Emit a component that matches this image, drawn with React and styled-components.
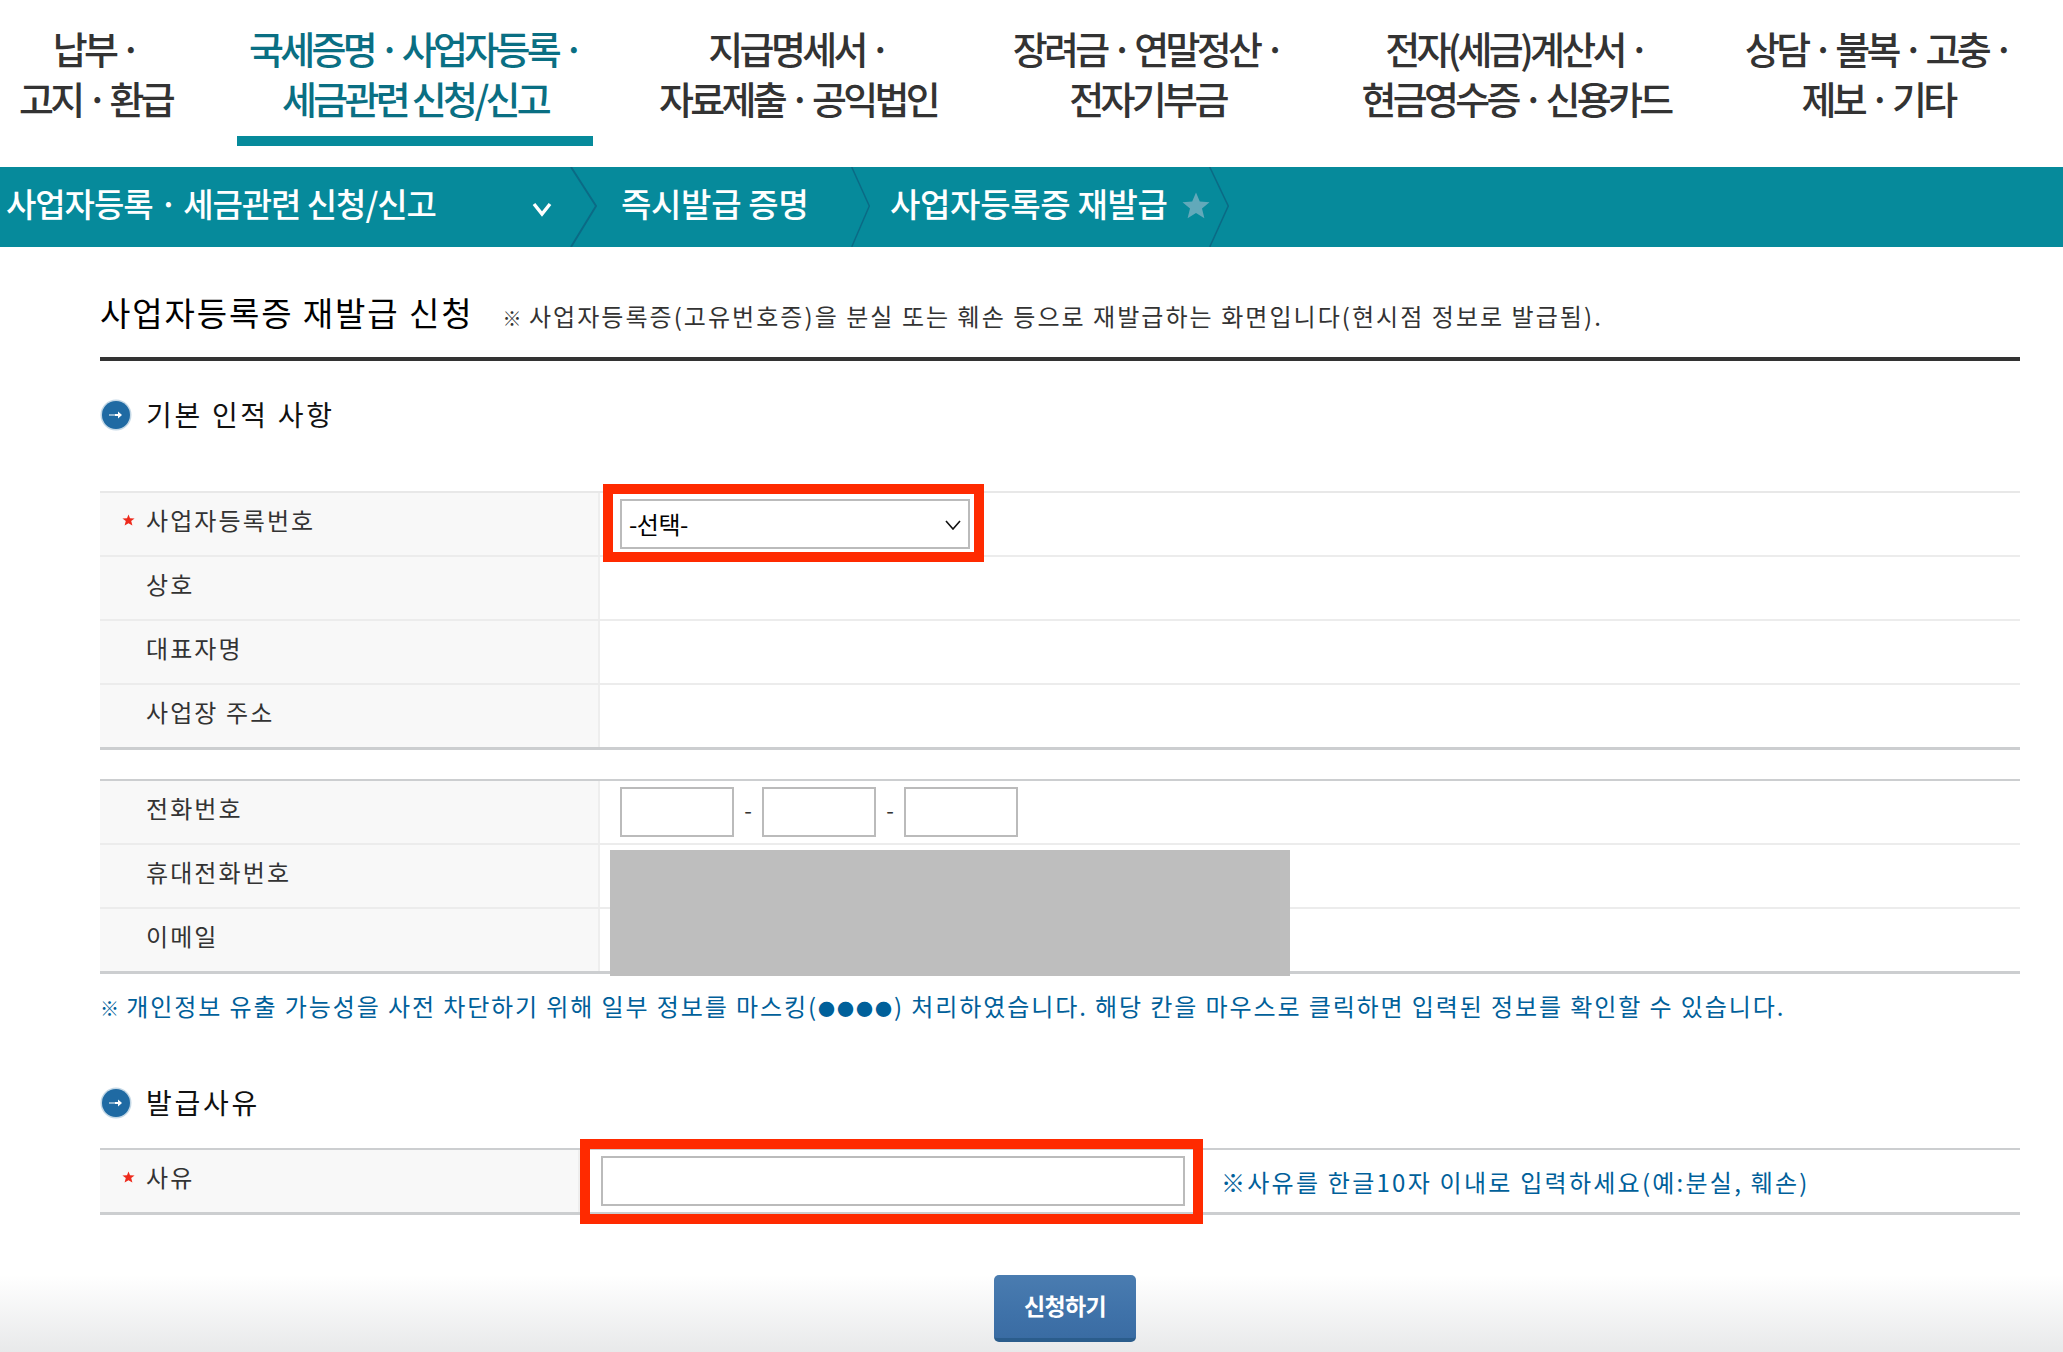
import React from "react";
import styled, { createGlobalStyle } from "styled-components";

const GlobalStyle = createGlobalStyle`
  html, body {
    margin: 0;
    padding: 0;
    background: #fff;
  }
  * {
    box-sizing: border-box;
  }
`;

const FONT = `"Noto Sans CJK KR", "Noto Sans", sans-serif`;

const NAV_ITEMS = [
  { width: 191, lines: ["납부 ·", "고지 · 환급"] },
  { width: 356, lines: ["국세증명 · 사업자등록 ·", "세금관련 신청/신고"], active: true },
  { width: 318, lines: ["지급명세서 ·", "자료제출 · 공익법인"] },
  { width: 289, lines: ["장려금 · 연말정산 ·", "전자기부금"] },
  { width: 356, lines: ["전자(세금)계산서 ·", "현금영수증 · 신용카드"] },
  { width: 276, lines: ["상담 · 불복 · 고충 ·", "제보 · 기타"] },
];

const CrumbSeparator = ({ width }) => (
  <SeparatorSvg $width={width} viewBox="0 0 28 80" preserveAspectRatio="none">
    <path d="M1 0 L27 39 L1 80" fill="none" stroke="#0b6a85" strokeWidth="2" />
  </SeparatorSvg>
);

const SectionIcon = () => (
  <svg width="32" height="32" viewBox="0 0 32 32">
    <circle cx="16" cy="16" r="15.5" fill="#c4d8e6" />
    <circle cx="16" cy="16" r="14" fill="#1f6aa3" />
    <path d="M9 16 H16" stroke="#8fb4cf" strokeWidth="2" />
    <path d="M15 16 H21" stroke="#fff" strokeWidth="2" />
    <path d="M18 12.5 L22 16 L18 19.5 Z" fill="#fff" />
  </svg>
);

const RequiredStar = () => (
  <svg width="13" height="12" viewBox="0 0 13 12">
    <path d="M6.5 0.5 L8 4.2 L12.6 4.5 L9.2 7 L10.4 11.5 L6.5 9.2 L2.6 11.5 L3.8 7 L0.4 4.5 L5 4.2 Z" fill="#ee2a1c" />
  </svg>
);

const Field = ({ label, required, children }) => (
  <Row>
    <Label>
      <MarkSlot>{required && <RequiredStar />}</MarkSlot>
      {label}
    </Label>
    <Value>{children}</Value>
  </Row>
);

export default function App() {
  return (
    <Page>
      <GlobalStyle />
      <Nav>
        {NAV_ITEMS.map((item) => (
          <NavItem key={item.lines[0]} $width={item.width} $active={item.active}>
            {item.lines[0]}
            <br />
            {item.lines[1]}
          </NavItem>
        ))}
      </Nav>

      <CrumbBar>
        <Crumb $width={597} $pad={6} $spacing={-1.05}>
          사업자등록 · 세금관련 신청/신고
          <CrumbArrow width="22" height="16" viewBox="0 0 22 16">
            <path d="M3 3 L11 13 L19 3" fill="none" stroke="#fff" strokeWidth="3.4" />
          </CrumbArrow>
          <CrumbSeparator width={27} />
        </Crumb>
        <Crumb $width={273} $pad={24}>
          즉시발급 증명
          <CrumbSeparator width={19} />
        </Crumb>
        <Crumb $width={359} $pad={20}>
          사업자등록증 재발급
          <StarIcon width="28" height="27" viewBox="0 0 28 27">
            <path d="M14 0.5 L17.8 9.6 L27.5 10.3 L20 16.6 L22.4 26.2 L14 21 L5.6 26.2 L8 16.6 L0.5 10.3 L10.2 9.6 Z" fill="#62a9ba" />
          </StarIcon>
          <CrumbSeparator width={20} />
        </Crumb>
      </CrumbBar>

      <Content>
        <TitleRow>
          <Title>사업자등록증 재발급 신청</Title>
          <TitleNote><RefMark>※</RefMark> 사업자등록증(고유번호증)을 분실 또는 훼손 등으로 재발급하는 화면입니다(현시점 정보로 발급됨).</TitleNote>
        </TitleRow>

        <SectionHeading $height={130} $pad={33}>
          <SectionIcon />
          기본 인적 사항
        </SectionHeading>

        <Table>
          <Field label="사업자등록번호" required>
            <SelectWrap>
              <Select defaultValue="">
                <option value="">-선택-</option>
              </Select>
              <SelectArrow width="16" height="10" viewBox="0 0 16 10">
                <path d="M1 1 L8 9 L15 1" fill="none" stroke="#111" strokeWidth="1.6" />
              </SelectArrow>
            </SelectWrap>
            <Highlight $left={3} $top={-9} $width={381} $height={78} />
          </Field>
          <Field label="상호" />
          <Field label="대표자명" />
          <Field label="사업장 주소" />
        </Table>

        <Table $strong $gap={29}>
          <MaskBlock />
          <Field label="전화번호">
            <PhoneInput />
            <Dash>-</Dash>
            <PhoneInput />
            <Dash>-</Dash>
            <PhoneInput />
          </Field>
          <Field label="휴대전화번호" />
          <Field label="이메일" />
        </Table>

        <Note>
          <RefMark>※</RefMark> 개인정보 유출 가능성을 사전 차단하기 위해 일부 정보를 마스킹(<MaskDots>●●●●</MaskDots>) 처리하였습니다. 해당 칸을 마우스로 클릭하면 입력된 정보를 확인할 수 있습니다.
        </Note>

        <SectionHeading $height={109} $pad={43}>
          <SectionIcon />
          발급사유
        </SectionHeading>

        <Table $strong $labelWidth={480}>
          <Field label="사유" required>
            <ReasonInput />
            <Hint>※사유를 한글10자 이내로 입력하세요(예:분실, 훼손)</Hint>
            <Highlight $left={0} $top={-11} $width={623} $height={85} />
          </Field>
        </Table>

        <ButtonRow>
          <SubmitButton type="button">신청하기</SubmitButton>
        </ButtonRow>
      </Content>
    </Page>
  );
}

const Page = styled.div`
  height: 1352px;
  overflow: hidden;
  font-family: ${FONT};
  background: linear-gradient(to bottom, #fff 1275px, #e8e9ea 1352px);
`;

const Nav = styled.nav`
  display: flex;
  gap: 46px;
  height: 167px;
`;

const NavItem = styled.a`
  display: block;
  flex: none;
  width: ${(p) => p.$width}px;
  height: 146px;
  padding-top: 23px;
  text-align: center;
  font-size: 38px;
  font-weight: 500;
  line-height: 50px;
  letter-spacing: -3.7px;
  white-space: nowrap;
  color: ${(p) => (p.$active ? "#0a6f83" : "#333")};
  border-bottom: 10px solid ${(p) => (p.$active ? "#068a9b" : "transparent")};
`;

const CrumbBar = styled.div`
  display: flex;
  height: 80px;
  background: #068a9b;
`;

const Crumb = styled.div`
  position: relative;
  display: flex;
  align-items: center;
  flex: none;
  width: ${(p) => p.$width}px;
  padding-left: ${(p) => p.$pad}px;
  padding-bottom: 8px;
  font-size: 33px;
  font-weight: 500;
  letter-spacing: ${(p) => p.$spacing ?? -0.3}px;
  white-space: nowrap;
  color: #fff;
`;

const SeparatorSvg = styled.svg`
  position: absolute;
  top: 0;
  right: 0;
  width: ${(p) => p.$width}px;
  height: 80px;
`;

const CrumbArrow = styled.svg`
  position: absolute;
  left: 531px;
  top: 34px;
`;

const StarIcon = styled.svg`
  margin: 4px 0 0 14px;
`;

const Content = styled.main`
  padding: 0 43px 0 100px;
`;

const TitleRow = styled.div`
  display: flex;
  align-items: baseline;
  gap: 29px;
  height: 114px;
  padding-top: 41px;
  border-bottom: 4px solid #333;
`;

const Title = styled.h1`
  margin: 0;
  font-size: 33px;
  font-weight: 400;
  letter-spacing: 1.9px;
  white-space: nowrap;
  color: #000;
`;

const TitleNote = styled.span`
  font-size: 24px;
  letter-spacing: 2.05px;
  color: #333;
  white-space: nowrap;
`;

const RefMark = styled.span`
  font-size: 19px;
  letter-spacing: 0;
`;

const SectionHeading = styled.h2`
  display: flex;
  align-items: flex-start;
  gap: 14px;
  height: ${(p) => p.$height}px;
  margin: 0;
  padding-top: ${(p) => p.$pad}px;
  font-size: 28px;
  font-weight: 400;
  line-height: 40px;
  letter-spacing: 2.7px;
  color: #111;

  svg {
    margin-top: 5px;
  }
`;

const Table = styled.section`
  --label-width: ${(p) => p.$labelWidth || 500}px;
  position: relative;
  margin-top: ${(p) => p.$gap || 0}px;
  border-top: 2px solid ${(p) => (p.$strong ? "#ccced0" : "#e8e8e8")};
  border-bottom: 3px solid #ccced0;
`;

const Row = styled.div`
  display: grid;
  grid-template-columns: var(--label-width) 1fr;
  height: 64px;
  border-bottom: 2px solid #ececec;

  &:last-child {
    height: 62px;
    border-bottom: none;
  }
`;

const Label = styled.div`
  display: flex;
  align-items: center;
  padding-bottom: 9px;
  background: #f8f8f8;
  border-right: 2px solid #eee;
  font-size: 24px;
  letter-spacing: 2.1px;
  color: #333;
`;

const MarkSlot = styled.span`
  display: flex;
  align-items: center;
  flex: none;
  width: 46px;
  padding-left: 22px;
`;

const Value = styled.div`
  position: relative;
  display: flex;
  align-items: center;
  padding-left: 20px;
`;

const SelectWrap = styled.div`
  position: relative;
  width: 350px;
  height: 50px;
`;

const Select = styled.select`
  width: 100%;
  height: 100%;
  padding: 0 0 2px 7px;
  appearance: none;
  border: 2px solid #bbb;
  border-radius: 0;
  background: #fff;
  font-family: ${FONT};
  font-size: 24px;
  letter-spacing: -0.5px;
  color: #000;
`;

const SelectArrow = styled.svg`
  position: absolute;
  right: 9px;
  top: 21px;
`;

const Highlight = styled.div`
  position: absolute;
  left: ${(p) => p.$left}px;
  top: ${(p) => p.$top}px;
  width: ${(p) => p.$width}px;
  height: ${(p) => p.$height}px;
  border: 10px solid #ff2a00;
  pointer-events: none;
`;

const PhoneInput = styled.input`
  width: 114px;
  height: 50px;
  padding: 0;
  border: 2px solid #bbb;
  background: #fff;
`;

const Dash = styled.span`
  width: 28px;
  padding-bottom: 6px;
  text-align: center;
  font-size: 22px;
  color: #333;
`;

const MaskBlock = styled.div`
  position: absolute;
  z-index: 1;
  left: 510px;
  top: 69px;
  width: 680px;
  height: 126px;
  background: #bebebe;
`;

const Note = styled.p`
  margin: 0;
  padding-top: 15px;
  height: 65px;
  font-size: 24px;
  line-height: 34px;
  letter-spacing: 1.9px;
  white-space: nowrap;
  color: #00609a;
`;

const MaskDots = styled.span`
  font-size: 17px;
  letter-spacing: 2px;
`;

const ReasonInput = styled.input`
  flex: none;
  width: 584px;
  height: 50px;
  margin-left: 1px;
  padding: 0;
  border: 2px solid #bbb;
  background: #fff;
`;

const Hint = styled.span`
  margin-left: 36px;
  font-size: 24px;
  letter-spacing: 2.25px;
  white-space: nowrap;
  color: #00609a;
`;

const ButtonRow = styled.div`
  display: flex;
  justify-content: center;
  padding: 60px 0 0 10px;
`;

const SubmitButton = styled.button`
  width: 142px;
  height: 67px;
  padding: 0 0 4px;
  border: none;
  border-bottom: 4px solid #2b5d8c;
  border-radius: 5px;
  background: linear-gradient(to bottom, #4a7cb0 0, #3f72a9 60%, #3a6ca3 100%);
  font-family: ${FONT};
  font-size: 23px;
  font-weight: 700;
  letter-spacing: -0.6px;
  color: #fff;
`;
